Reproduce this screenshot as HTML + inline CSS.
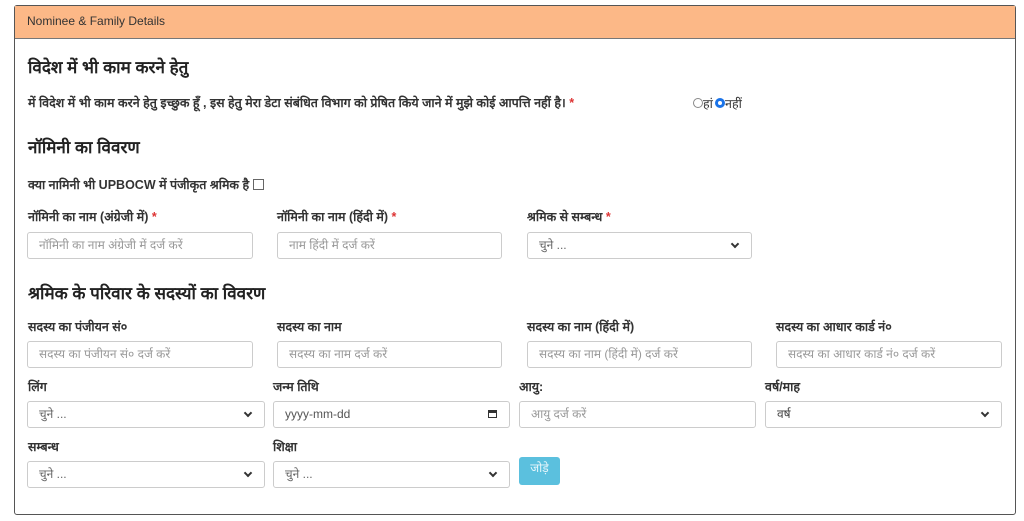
<!DOCTYPE html>
<html><head><meta charset="utf-8"><style>
body{margin:0;width:1024px;height:521px;background:#fff;font-family:"Liberation Sans",sans-serif;color:#222;position:relative;overflow:hidden}
.a{position:absolute;white-space:nowrap}
.panel{position:absolute;left:14px;top:5px;width:1000px;height:508px;border:1px solid #555;border-radius:3px}
.hd{position:absolute;left:0;top:0;right:0;height:32px;background:#fcb887;border-bottom:1px solid #777}
.h{font-size:17px;font-weight:bold;color:#222}
.t{font-size:12.5px;font-weight:bold;color:#333}
.lb{font-size:12.5px;font-weight:bold;color:#333}
.in{position:absolute;height:27px;border:1px solid #ccc;border-radius:3px;box-sizing:border-box;font-size:12px;color:#999;padding:3px 11px;background:#fff;line-height:18px}
.sel::after{content:"";position:absolute;right:13px;top:8px;width:4px;height:4px;border-right:2px solid #333;border-bottom:2px solid #333;transform:rotate(45deg)}
.r{color:#d33}
</style></head><body>
<div class="panel"><div class="hd"></div></div>
<div class="a" style="left:27px;top:14px;font-size:12px;color:#333">Nominee &amp; Family Details</div>
<div class="a h" style="left:28px;top:55px">विदेश में भी काम करने हेतु</div>
<div class="a t" style="left:28px;top:94px">में विदेश में भी काम करने हेतु इच्छुक हूँ , इस हेतु मेरा डेटा संबंधित विभाग को प्रेषित किये जाने में मुझे कोई आपत्ति नहीं है। <span class="r">*</span></div>
<div class="a" style="left:693px;top:98px;width:10px;height:10px;border:1px solid #888;border-radius:50%;box-sizing:border-box"></div>
<div class="a t" style="left:703px;top:95px;font-weight:normal">हां</div>
<div class="a" style="left:715px;top:98px;width:10px;height:10px;border:3px solid #1a73e8;border-radius:50%;box-sizing:border-box"></div>
<div class="a t" style="left:725px;top:95px;font-weight:normal">नहीं</div>
<div class="a h" style="left:28px;top:135px">नॉमिनी का विवरण</div>
<div class="a t" style="left:28px;top:176px">क्या नामिनी भी UPBOCW में पंजीकृत श्रमिक है <span style="display:inline-block;width:9px;height:9px;border:1px solid #666;vertical-align:-1px"></span></div>
<div class="a lb" style="left:28px;top:208px">नॉमिनी का नाम (अंग्रेजी में) <span class="r">*</span></div>
<div class="a lb" style="left:277px;top:208px">नॉमिनी का नाम (हिंदी में) <span class="r">*</span></div>
<div class="a lb" style="left:527px;top:208px">श्रमिक से सम्बन्ध <span class="r">*</span></div>
<div class="in" style="left:27px;top:232px;width:226px">नॉमिनी का नाम अंग्रेजी में दर्ज करें</div>
<div class="in" style="left:277px;top:232px;width:225px">नाम हिंदी में दर्ज करें</div>
<div class="in sel" style="left:527px;top:232px;width:225px;color:#666">चुने ...</div>
<div class="a h" style="left:28px;top:281px">श्रमिक के परिवार के सदस्यों का विवरण</div>
<div class="a lb" style="left:28px;top:318px">सदस्य का पंजीयन सं०</div>
<div class="a lb" style="left:277px;top:318px">सदस्य का नाम</div>
<div class="a lb" style="left:527px;top:318px">सदस्य का नाम (हिंदी में)</div>
<div class="a lb" style="left:776px;top:318px">सदस्य का आधार कार्ड नं०</div>
<div class="in" style="left:27px;top:341px;width:226px">सदस्य का पंजीयन सं० दर्ज करें</div>
<div class="in" style="left:277px;top:341px;width:225px">सदस्य का नाम दर्ज करें</div>
<div class="in" style="left:527px;top:341px;width:225px">सदस्य का नाम (हिंदी में) दर्ज करें</div>
<div class="in" style="left:776px;top:341px;width:226px">सदस्य का आधार कार्ड नं० दर्ज करें</div>
<div class="a lb" style="left:28px;top:378px">लिंग</div>
<div class="a lb" style="left:273px;top:378px">जन्म तिथि</div>
<div class="a lb" style="left:519px;top:378px">आयु:</div>
<div class="a lb" style="left:765px;top:378px">वर्ष/माह</div>
<div class="in sel" style="left:27px;top:401px;width:238px;color:#666">चुने ...</div>
<div class="in" style="left:273px;top:401px;width:237px;color:#555">yyyy-mm-dd<span style="position:absolute;right:12px;top:8px;width:9px;height:8px;border:1px solid #333;border-top-width:3px;box-sizing:border-box"></span></div>
<div class="in" style="left:519px;top:401px;width:237px">आयु दर्ज करें</div>
<div class="in sel" style="left:765px;top:401px;width:237px;color:#444">वर्ष</div>
<div class="a lb" style="left:28px;top:438px">सम्बन्ध</div>
<div class="a lb" style="left:273px;top:438px">शिक्षा</div>
<div class="in sel" style="left:27px;top:461px;width:238px;color:#666">चुने ...</div>
<div class="in sel" style="left:273px;top:461px;width:237px;color:#666">चुने ...</div>
<div class="a" style="left:519px;top:457px;width:41px;height:28px;background:#5bc0de;border-radius:3px;color:#e8f6fb;font-size:12px;text-align:center;line-height:22px">जोड़े</div>
</body></html>
